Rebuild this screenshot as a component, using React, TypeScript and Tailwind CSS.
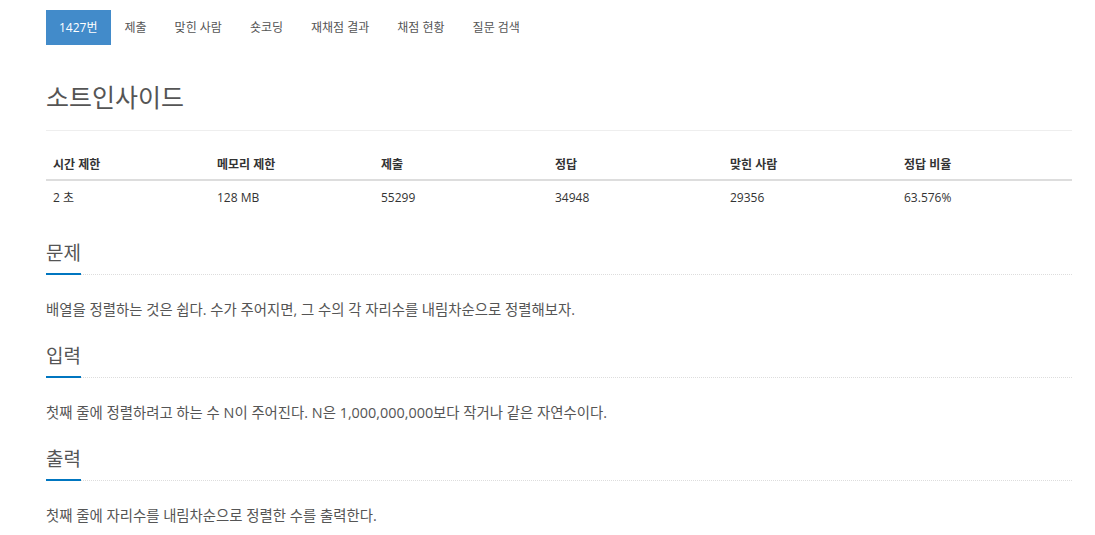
import React from 'react';

const tabs = ['제출', '맞힌 사람', '숏코딩', '재채점 결과', '채점 현황', '질문 검색'];

const heads = ['시간 제한', '메모리 제한', '제출', '정답', '맞힌 사람', '정답 비율'];
const values = ['2 초', '128 MB', '55299', '34948', '29356', '63.576%'];
const widths = ['w-[164px]', 'w-[164px]', 'w-[174px]', 'w-[175px]', 'w-[174px]', 'w-[175px]'];

const sections = [
  { title: '문제', body: '배열을 정렬하는 것은 쉽다. 수가 주어지면, 그 수의 각 자리수를 내림차순으로 정렬해보자.' },
  { title: '입력', body: '첫째 줄에 정렬하려고 하는 수 N이 주어진다. N은 1,000,000,000보다 작거나 같은 자연수이다.' },
  { title: '출력', body: '첫째 줄에 자리수를 내림차순으로 정렬한 수를 출력한다.' },
];

export default function App() {
  return (
    <div
      className="min-h-[535px] bg-white text-[#555]"
      style={{ fontFamily: '"Open Sans", "Noto Sans CJK KR", sans-serif' }}
    >
      <div className="ml-[46px] w-[1026px]">
        {/* tabs */}
        <ul className="mt-[10px] flex h-[35px] items-stretch text-[12px]">
          <li className="flex items-center bg-[#428bca] px-[13px] text-white">1427번</li>
          {tabs.map((t) => (
            <li key={t} className="flex items-center px-[14px] text-[#555]">
              {t}
            </li>
          ))}
        </ul>

        {/* title */}
        <div className="mt-[37px] border-b border-[#eee] pb-[18px]">
          <h1 className="text-[25px] leading-[30px] text-[#555]">소트인사이드</h1>
        </div>

        {/* info table */}
        <div className="mt-[14px] text-[12px]">
          <div className="flex h-[36px] items-center border-b-2 border-[#ddd] pt-[6px] font-bold text-[#333]">
            {heads.map((h, i) => (
              <div key={h} className={`${widths[i]} px-[7px]`}>
                {h}
              </div>
            ))}
          </div>
          <div className="flex h-[30px] items-center pt-[4px] text-[#333]">
            {values.map((v, i) => (
              <div key={i} className={`${widths[i]} px-[7px]`}>
                {v}
              </div>
            ))}
          </div>
        </div>

        {/* sections */}
        <div className="mt-[30px] flex flex-col gap-[24px]">
          {sections.map((s) => (
            <div key={s.title}>
              <div className="border-b border-dotted border-[#ddd]">
                <h2 className="mb-[-1px] inline-block border-b-2 border-[#0076c0] pb-[8px] text-[19px] leading-[24px] text-[#555]">
                  {s.title}
                </h2>
              </div>
              <p className="mt-[25px] text-[14.4px] leading-[20px] text-[#555]">{s.body}</p>
            </div>
          ))}
        </div>
      </div>
    </div>
  );
}
